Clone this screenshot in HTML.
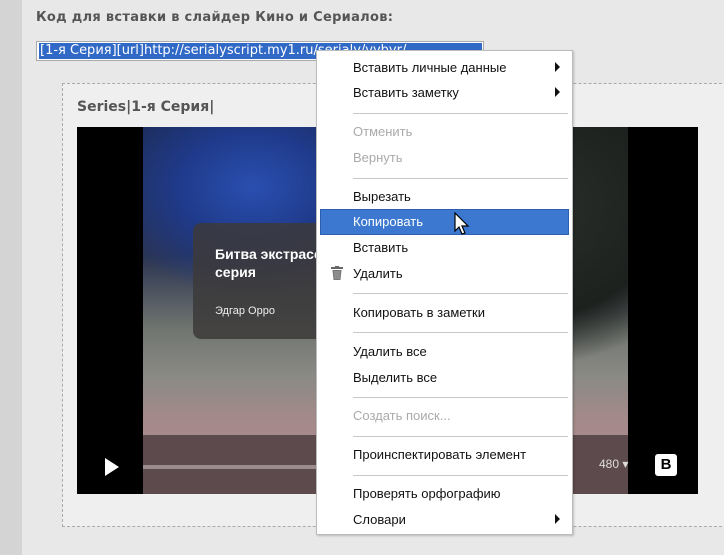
<!DOCTYPE html>
<html><head><meta charset="utf-8"><style>
*{margin:0;padding:0;box-sizing:border-box}
body{width:724px;height:555px;overflow:hidden;background:#e8e8e8;font-family:"Liberation Sans","DejaVu Sans",sans-serif;position:relative}
.strip{position:absolute;left:0;top:0;width:22px;height:555px;background:#d4d4d4}
.title{position:absolute;left:36px;top:10px;font-size:13px;font-weight:bold;color:#555;font-family:"DejaVu Sans",sans-serif;letter-spacing:0.3px}
.inp{position:absolute;left:36px;top:41px;width:448px;height:20px;background:#fff;border:1px solid #aaa}
.sel{position:absolute;left:39px;top:43px;height:16px;background:#3169c6;color:#fff;font-size:13px;line-height:16px;white-space:nowrap;padding:0 1px;font-family:"DejaVu Sans",sans-serif;width:443px;overflow:hidden}
.box{position:absolute;left:62px;top:83px;width:680px;height:444px;border:1px dashed #aaa;background:#efefef}
.st{position:absolute;left:77px;top:99px;font-size:14px;font-weight:bold;color:#555;font-family:"DejaVu Sans",sans-serif}
.vid{position:absolute;left:77px;top:127px;width:621px;height:367px;background:#000;overflow:hidden}
.scene{position:absolute;left:66px;top:0;width:485px;height:367px;background:
radial-gradient(ellipse 150px 110px at 110px 60px,#2a4fb0 0%,#1f3a8a 50%,transparent 100%),
radial-gradient(ellipse 200px 160px at 380px 80px,#2b302c 0%,#1d211e 70%,transparent 100%),
linear-gradient(180deg,#1c2a55 0%,#2a3350 35%,#707570 55%,#8a8a85 68%,#a58a8a 80%,#b08e92 100%)}
.bar{position:absolute;left:66px;top:308px;width:485px;height:59px;background:#5d4a4c}
.prog{position:absolute;left:66px;top:338px;width:230px;height:4px;background:#9a8c8c}
.play{position:absolute;left:28px;top:331px;width:0;height:0;border-left:14px solid #fff;border-top:9px solid transparent;border-bottom:9px solid transparent}
.q{position:absolute;left:522px;top:330px;color:#ddd;font-size:12px}
.vk{position:absolute;left:578px;top:327px;width:22px;height:22px;background:#fff;border-radius:3px;color:#000;font-weight:bold;font-size:15px;text-align:center;line-height:22px}
.card{position:absolute;left:116px;top:96px;width:380px;height:116px;background:rgba(60,58,58,.85);border-radius:8px}
.card .h{position:absolute;left:22px;top:22px;color:#fff;font-size:14px;font-weight:bold;line-height:18px;white-space:nowrap}
.card .a{position:absolute;left:22px;top:82px;color:#eee;font-size:11px;white-space:nowrap}
.menu{position:absolute;left:316px;top:50px;width:257px;height:485px;background:#fff;border:1px solid #bcbcbc;box-shadow:1px 1px 2px rgba(0,0,0,.2)}
.it{position:absolute;left:36px;font-size:13px;color:#111;white-space:nowrap}
.dis{color:#aaa}
.sep{position:absolute;left:36px;width:215px;height:1px;background:#c8c8c8}
.hl{position:absolute;left:3px;top:158px;width:249px;height:26px;background:#3c78cf;border:1px solid #2d5fae}
.ar{position:absolute;left:238px;width:0;height:0;border-left:5px solid #111;border-top:5px solid transparent;border-bottom:5px solid transparent}
</style></head><body>
<div class="strip"></div>
<div class="title">Код для вставки в слайдер Кино и Сериалов:</div>
<div class="inp"></div>
<div class="sel">[1-я Серия][url]http://serialyscript.my1.ru/serialy/vybyr/</div>
<div class="box"></div>
<div class="st">Series|1-я Серия|</div>
<div class="vid">
<div class="scene"></div>
<div class="bar"></div>
<div class="prog"></div>
<div class="play"></div>
<div class="card"><div class="h">Битва экстрасенсов 17 сезон 1<br>серия</div><div class="a">Эдгар Орро</div></div>
<div class="q">480 ▾</div>
<div class="vk">B</div>
</div>
<div class="menu">
<div class="hl"></div>
<div class="it" style="top:9px">Вставить личные данные</div><div class="ar" style="top:11px"></div>
<div class="it" style="top:34px">Вставить заметку</div><div class="ar" style="top:36px"></div>
<div class="sep" style="top:62px"></div>
<div class="it dis" style="top:73px">Отменить</div>
<div class="it dis" style="top:99px">Вернуть</div>
<div class="sep" style="top:127px"></div>
<div class="it" style="top:138px">Вырезать</div>
<div class="it" style="top:163px;color:#fff">Копировать</div>
<div class="it" style="top:189px">Вставить</div>
<div class="it" style="top:215px">Удалить</div>
<svg style="position:absolute;left:14px;top:215px" width="12" height="14" viewBox="0 0 12 14"><rect x="0" y="1" width="12" height="2" fill="#666"/><rect x="4" y="0" width="4" height="2" fill="#666"/><path d="M1.5 4h9l-1 10h-7z" fill="#777"/><path d="M4 5v8M6 5v8M8 5v8" stroke="#aaa" stroke-width="0.8"/></svg>
<div class="sep" style="top:242px"></div>
<div class="it" style="top:254px">Копировать в заметки</div>
<div class="sep" style="top:281px"></div>
<div class="it" style="top:293px">Удалить все</div>
<div class="it" style="top:319px">Выделить все</div>
<div class="sep" style="top:346px"></div>
<div class="it dis" style="top:357px">Создать поиск...</div>
<div class="sep" style="top:385px"></div>
<div class="it" style="top:396px">Проинспектировать элемент</div>
<div class="sep" style="top:424px"></div>
<div class="it" style="top:435px">Проверять орфографию</div>
<div class="it" style="top:461px">Словари</div><div class="ar" style="top:463px"></div>
</div>
<svg style="position:absolute;left:454px;top:212px" width="16" height="26" viewBox="0 0 16 26"><path d="M1 1v18l4-4 3 7 3-1-3-7h6z" fill="#fff" stroke="#000" stroke-width="1.2"/></svg>
</body></html>
